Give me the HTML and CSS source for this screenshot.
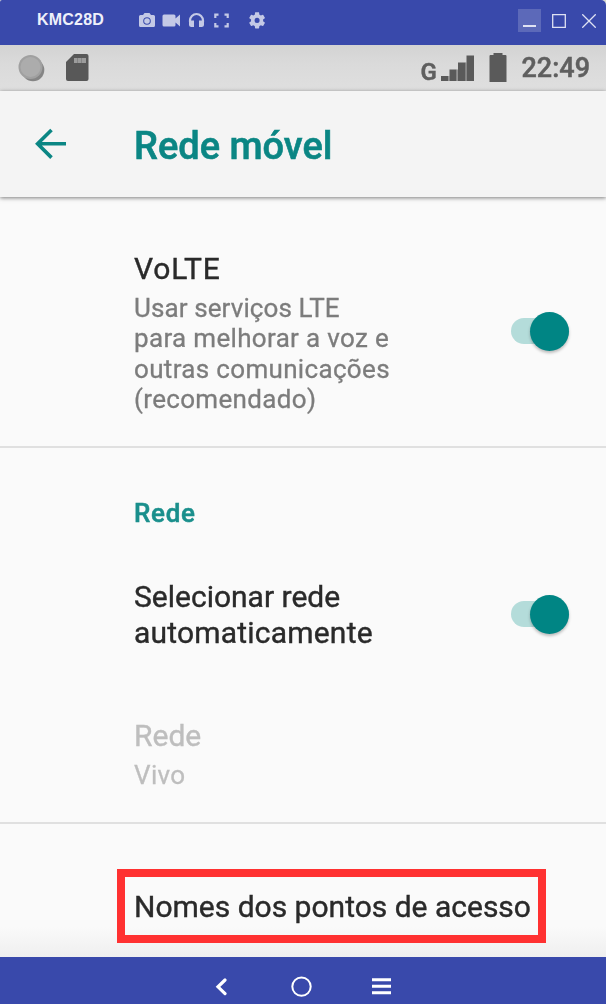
FILE: index.html
```html
<!DOCTYPE html>
<html lang="pt-BR">
<head>
<meta charset="utf-8">
<title>Rede móvel</title>
<link rel="stylesheet" href="styles.css">
</head>
<body>
<div class="window">
  <header class="titlebar">
    <span class="device">KMC28D</span>
    <svg class="tools" width="130" height="20" viewBox="0 0 130 20">
      <path fill-rule="evenodd" d="M2.500 5h2.500l1.500-2h5l1.500 2h2.500q1.500 0 1.500 1.500v9q0 1.500-1.500 1.500h-13q-1.500 0-1.500-1.500v-9q0-1.500 1.500-1.500zM9 7.200a3.800 3.800 0 1 0 0 7.600 3.800 3.800 0 0 0 0-7.600z"/>
      <circle cx="9" cy="11" r="2.800"/>
      <path d="M26 4.500h10q1.500 0 1.500 1.500v2.500l4.500-4v12l-4.500-4v2.500q0 1.500-1.500 1.500H26q-1.500 0-1.500-1.500V6q0-1.500 1.500-1.500z"/>
      <path class="tool-line" d="M52 12v-1.500a6.500 6.500 0 0 1 13 0V12" />
      <path d="M51 10.500h5V17h-2.500q-2.500 0-2.500-2.500zM61 10.500h5v4q0 2.500-2.500 2.500H61z"/>
      <path class="tool-line" d="M77.300 8V4.700H80.500M86.500 4.700H89.700V8M89.700 13v3.300h-3.200M80.500 16.300h-3.200V13"/>
      <path transform="translate(109 .3) scale(.84)" d="M19.140 12.940c.04-.3.060-.61.060-.94s-.02-.64-.07-.94l2.030-1.580c.18-.14.230-.41.120-.61l-1.920-3.320c-.12-.22-.37-.29-.59-.22l-2.390.96c-.5-.38-1.030-.7-1.620-.94l-.36-2.540c-.04-.24-.24-.41-.48-.41h-3.840c-.24 0-.43.170-.47.410l-.36 2.540c-.59.240-1.130.57-1.620.94l-2.390-.96c-.22-.08-.47 0-.59.220L2.740 8.870c-.12.210-.08.470.12.610l2.030 1.580c-.05.300-.09.630-.09.940s.02.640.07.940l-2.030 1.580c-.18.140-.23.410-.12.610l1.920 3.320c.12.220.37.290.59.220l2.390-.96c.5.380 1.030.7 1.620.94l.36 2.540c.05.240.24.410.48.410h3.840c.24 0 .44-.17.470-.41l.36-2.540c.59-.24 1.130-.56 1.620-.94l2.390.96c.22.080.47 0 .59-.22l1.920-3.320c.12-.22.070-.47-.12-.61zM12 15a3 3 0 1 1 0-6 3 3 0 0 1 0 6z"/>
    </svg>
    <div class="controls">
      <span class="control control-min"><i></i></span>
      <span class="control"><svg width="14" height="14" viewBox="0 0 14 14"><path d="M.7.700h12.600v12.600H.7z"/></svg></span>
      <span class="control"><svg width="14" height="14" viewBox="0 0 14 14"><path d="M.3.300l13.400 13.400M13.700.300L.3 13.700"/></svg></span>
    </div>
  </header>

  <div class="statusbar">
    <svg class="soft" width="28" height="30" viewBox="0 0 28 30">
      <circle cx="15" cy="16" r="11.300" fill="#858585"/>
      <circle cx="12.500" cy="13" r="12" fill="#a0a0a0"/>
      <circle cx="12.500" cy="13" r="10" fill="#acacac"/>
    </svg>
    <svg class="sd soft" width="24" height="28" viewBox="0 0 24 28">
      <path d="M8 0h12.500q2 0 2 2v23q0 2-2 2H2q-2 0-2-2V8z" fill="#585858"/>
      <path d="M8 4h12v5H8z" fill="#9c9c9c"/>
      <path d="M11.500 4v5M15.500 4v5" stroke="#858585" stroke-width="1"/>
    </svg>
    <div class="status-right soft">
      <span class="net">G</span>
      <svg class="signal" width="34" height="26" viewBox="0 0 34 26">
        <path d="M0 21h7v5H0zM8.500 14.500H15.500V26h-7z"/>
        <path d="M17 7.500h7.500V26H17zM25.500.500H33V26h-7.500z"/>
        <path d="M7 21h1.500v5H7zM15.500 14.500H17V26h-1.500zM24.300 7.500h1.200V26h-1.200z" opacity=".55"/>
      </svg>
      <svg class="battery" width="18" height="29" viewBox="0 0 18 29"><path d="M4.500 0h9v2h3q1 0 1 1v26H.5V3q0-1 1-1h3z"/></svg>
      <span class="clock">22:49</span>
    </div>
  </div>

  <div class="appbar">
    <svg class="back soft" width="32" height="32" viewBox="0 0 32 32"><path d="M31 15.800H3M16.500 2L2.600 15.800 16.500 29.600"/></svg>
    <h1 class="title soft">Rede móvel</h1>
  </div>

  <main class="settings">
    <section class="group volte">
      <div class="text soft">
        <div class="name name-volte">VoLTE</div>
        <div class="summary">
          <div class="short">Usar serviços LTE</div>
          <div>para melhorar a voz e</div>
          <div>outras comunicações</div>
          <div>(recomendado)</div>
        </div>
      </div>
      <div class="switch soft"><span class="knob"></span></div>
    </section>

    <section class="group network">
      <h2 class="category soft">Rede</h2>
      <div class="row">
        <div class="name soft"><div>Selecionar rede</div><div class="wide">automaticamente</div></div>
        <div class="switch soft"><span class="knob"></span></div>
      </div>
      <div class="disabled soft">
        <div class="name">Rede</div>
        <div class="summary">Vivo</div>
      </div>
    </section>

    <section class="apn">
      <div class="highlight"><div class="name soft">Nomes dos pontos de acesso</div></div>
    </section>
  </main>

  <nav class="navbar">
    <svg width="12" height="18" viewBox="0 0 12 18"><path d="M10 2L3 8.800l7 6.800" stroke-width="3.200" stroke-linecap="round"/></svg>
    <svg width="22" height="22" viewBox="0 0 22 22"><circle cx="10.500" cy="10.600" r="9.200" stroke-width="2"/></svg>
    <svg width="19" height="17" viewBox="0 0 19 17"><path d="M0 1.800h19M0 8.300h19M0 14.700h19" stroke-width="3"/></svg>
  </nav>
</div>
</body>
</html>
```
FILE: styles.css
```css
* { box-sizing: border-box; }
body {
  margin: 0;
  background: #d8d8cc;
  font-family: Roboto, "Liberation Sans", sans-serif;
}
h1, h2 { margin: 0; font-weight: 500; }
svg { display: block; flex: none; }
/* Device screen content is upscaled by the emulator window */
.soft { filter: blur(.45px); }
.window {
  width: 606px;
  height: 1004px;
  display: flex;
  flex-direction: column;
  overflow: hidden;
  border-radius: 2px 5px 0 0;
  background: #fafafa;
}
.titlebar {
  height: 45px;
  flex: none;
  display: flex;
  align-items: flex-start;
  padding: 9px 6px 0 37px;
  background: #3949ab;
}
.device {
  width: 101px;
  font: bold 16px/21px "Liberation Sans", sans-serif;
  letter-spacing: .2px;
  color: #eef0fa;
}
.tools { fill: #c4c9e6; margin-top: 1px; }
.tool-line { fill: none; stroke: #c4c9e6; stroke-width: 2.2; }
.controls { margin-left: auto; display: flex; gap: 6.500px; }
.control {
  width: 23px;
  height: 23px;
  display: flex;
  align-items: center;
  justify-content: center;
}
.control svg { fill: none; stroke: #dfe2f3; stroke-width: 1.3; }
.control-min { background: #5c69b9; align-items: flex-end; padding-bottom: 5px; }
.control-min i { width: 13px; height: 2px; background: #dfe2f3; }

.statusbar {
  height: 46px;
  flex: none;
  display: flex;
  align-items: flex-start;
  padding: 9px 16px 0 18px;
  background: linear-gradient(#d3d3d3, #dadada 40%, #dfdfdf);
  color: #5f5f5f;
}
.sd { margin-left: 20px; }
.status-right { margin-left: auto; display: flex; align-items: flex-start; fill: #5a5a5a; }
.net { font-size: 24px; font-weight: 600; line-height: 28px; margin-top: 4px; width: 21px; -webkit-text-stroke: .4px; }
.signal { margin: 1px 0 0 0; }
.battery { margin: -1px 0 0 14px; }
.clock { margin-left: 14px; font-size: 27px; line-height: 29px; font-weight: 500; white-space: nowrap; -webkit-text-stroke: .5px; }

.appbar {
  height: 106px;
  flex: none;
  display: flex;
  align-items: flex-start;
  padding: 33px 0 0 35px;
  background: #f4f4f4;
  box-shadow: 0 1px 4px rgba(0, 0, 0, .5);
  z-index: 1;
}
.back { margin-top: 4px; fill: none; stroke: #0b8684; stroke-width: 3.6; }
.title { margin-left: 67px; font-size: 38px; line-height: 44px; color: #0b8684; white-space: nowrap; -webkit-text-stroke: .6px; }

.settings {
  flex: 1;
  background: linear-gradient(#fafafa 96%, #efefef);
}
.group { border-bottom: 2px solid #e0e0e0; padding-left: 134px; }
.name { font-size: 30px; line-height: 36px; color: #2a2a2a; white-space: nowrap; -webkit-text-stroke: .4px; }
.name-volte { letter-spacing: .8px; }
.wide { letter-spacing: .2px; }
.summary { font-size: 26px; line-height: 30.4px; color: #7c7c7c; white-space: nowrap; letter-spacing: .33px; -webkit-text-stroke: .3px; }
.short { letter-spacing: .1px; }
.volte { height: 251px; padding-top: 54px; padding-right: 37px; display: flex; justify-content: space-between; }
.volte .summary { margin-top: 6px; }
.volte .switch { margin-top: 67px; }
.switch {
  width: 58px;
  height: 26px;
  margin-top: 22px;
  border-radius: 13px;
  background: #b4dcda;
  display: flex;
  align-items: center;
  justify-content: flex-end;
}
.knob {
  width: 39px;
  height: 39px;
  flex: none;
  border-radius: 50%;
  background: #008584;
  box-shadow: 0 2px 3px rgba(0, 0, 0, .25);
}
.network { height: 376px; padding-top: 50px; padding-right: 37px; }
.category { font-size: 26px; line-height: 30px; color: #1a8f8c; letter-spacing: .7px; -webkit-text-stroke: .5px; }
.row { display: flex; justify-content: space-between; margin-top: 51px; }
.disabled { margin-top: 67px; }
.disabled .name, .disabled .summary { color: #bebebe; }
.disabled .summary { margin-top: 6px; }
.apn { padding: 45px 0 0 117px; }
.highlight {
  width: 429px;
  height: 74px;
  border: 8px solid #ff3131;
  padding: 12px 0 0 9px;
}

.navbar {
  height: 47px;
  flex: none;
  display: flex;
  align-items: center;
  padding: 12px 0 0 215px;
  background: #3949ab;
}
.navbar svg { fill: none; stroke: #fff; }
.navbar svg:nth-child(2) { margin: 0 59px 0 64px; }
```
